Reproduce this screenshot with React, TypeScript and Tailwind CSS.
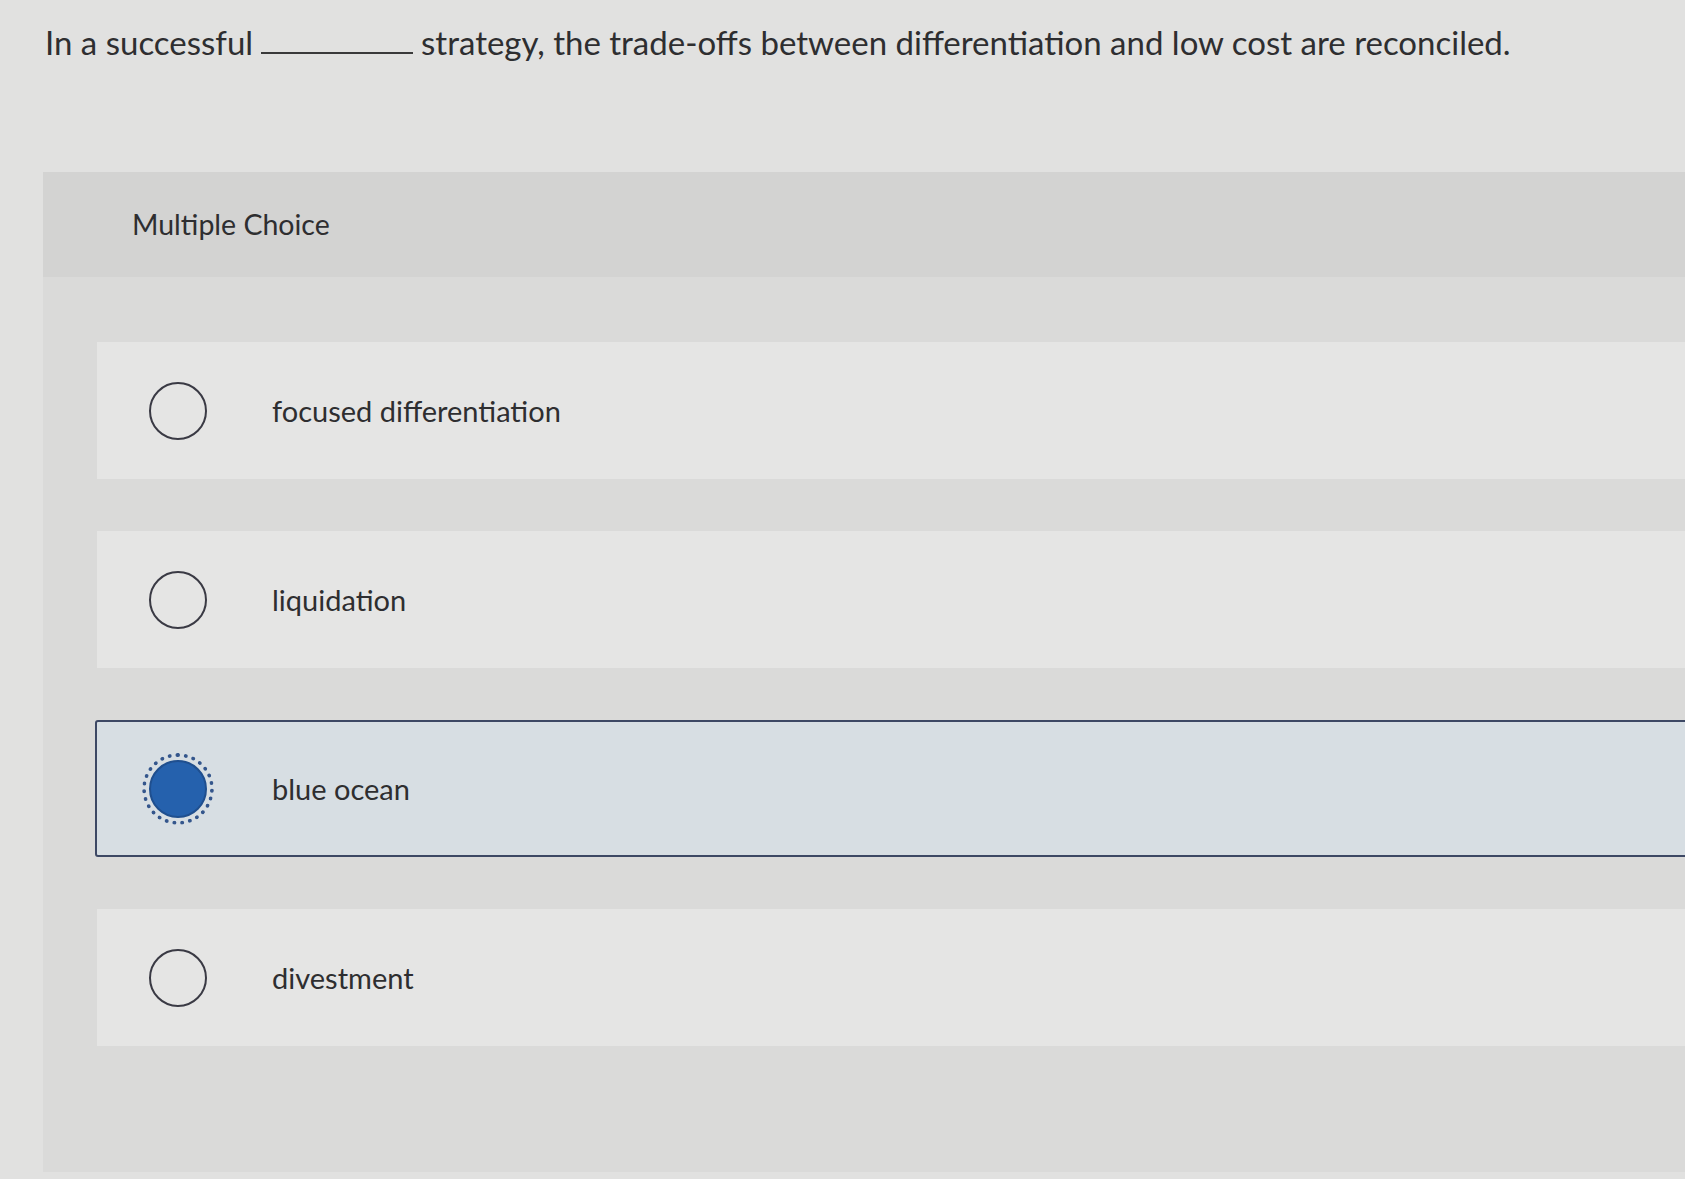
import React from "react";

const options = [
  { label: "focused differentiation", selected: false },
  { label: "liquidation", selected: false },
  { label: "blue ocean", selected: true },
  { label: "divestment", selected: false },
];

function Radio({ selected }: { selected: boolean }) {
  if (selected) {
    return (
      <div className="w-[72px] h-[72px] shrink-0 rounded-full border-[4px] border-dotted border-[#34568c] flex items-center justify-center -mx-[7px]">
        <div className="w-[58px] h-[58px] rounded-full bg-[#2561ad] border-2 border-[#1f4f8f]" />
      </div>
    );
  }
  return <div className="w-[58px] h-[58px] shrink-0 rounded-full border-[2.5px] border-[#3a3a44]" />;
}

export default function App() {
  return (
    <div
      className="w-[1685px] h-[1179px] overflow-hidden bg-[#e1e1e0] text-[#2e2e30]"
      style={{ fontFamily: "Lato, 'Open Sans', sans-serif" }}
    >
      <div className="pl-[45px] pt-[22px] h-[172px] flex items-start">
        <p className="text-[33px] leading-[40px] flex items-end">
          <span>In a successful</span>
          <span className="inline-block w-[152px] border-b-2 border-[#3a3a3a] mx-[8px] mb-[8px]" />
          <span>strategy, the trade-offs between differentiation and low cost are reconciled.</span>
        </p>
      </div>
      <div className="ml-[43px] h-[1000px] bg-[#dadad9] flex flex-col">
        <div className="h-[105px] bg-[#d3d3d2] flex items-center pl-[89px]">
          <span className="text-[28.5px]">Multiple Choice</span>
        </div>
        <div className="pl-[54px] pt-[65px] flex flex-col gap-[52px]">
          {options.map((o) => (
            <div
              key={o.label}
              className={
                o.selected
                  ? "h-[137px] flex items-center pl-[52px] bg-[#d7dee3] border-2 border-[#3d4864] rounded-[3px] -mr-[4px] -ml-[2px]"
                  : "h-[137px] flex items-center pl-[52px] bg-[#e5e5e4]"
              }
            >
              <Radio selected={o.selected} />
              <span className="ml-[65px] text-[29px]">{o.label}</span>
            </div>
          ))}
        </div>
      </div>
    </div>
  );
}
